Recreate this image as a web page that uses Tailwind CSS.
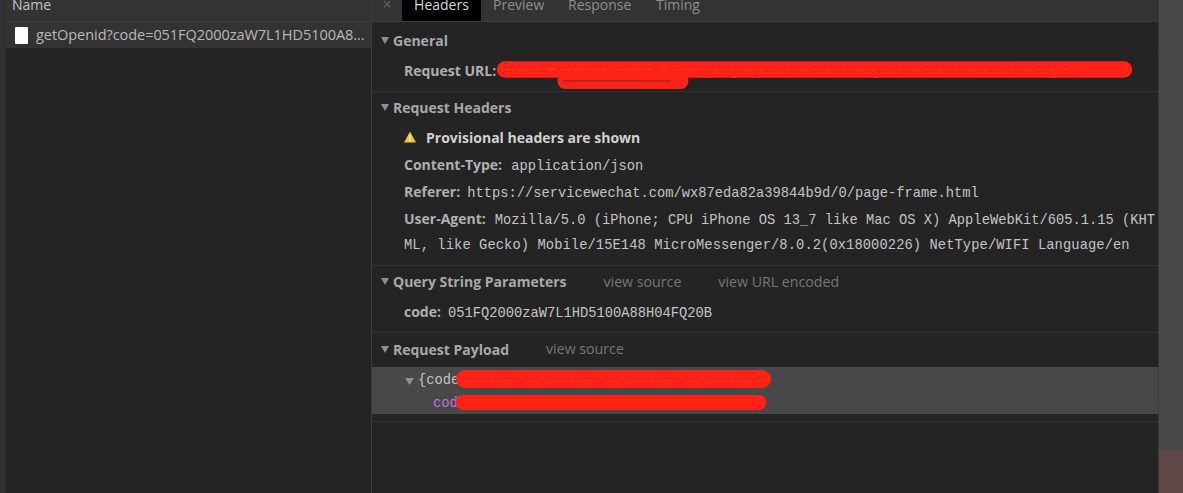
<!DOCTYPE html>
<html lang="en">
<head>
    <meta charset="UTF-8">
    <title>Network panel</title>
    <script src="https://cdn.jsdelivr.net/npm/@tailwindcss/browser@4"></script>
</head>
<body class="bg-[#242424] overflow-hidden font-['Open_Sans',sans-serif] text-[14px]">
    <div class="relative flex w-[1183px] h-[493px] overflow-hidden">
        <!-- Left strip -->
        <div class="w-[6px] bg-[#313131] border-r border-[#2a2a2a]"></div>

        <!-- Request list -->
        <div class="w-[366px] border-r border-[#3c3c3c] flex flex-col">
            <div class="h-[22px] bg-[#333333] border-b border-[#3d3d3d] pl-[6px] text-[#c4c4c4] leading-[9px] overflow-hidden">Name</div>
            <div class="h-[26px] bg-[#333333] flex items-center pl-[9px] text-[#b9b9b9] text-[14.5px] tracking-[-0.05px] whitespace-nowrap">
                <div class="w-[13px] h-[17px] bg-white rounded-[1px] mr-[8px]"></div>
                <span>getOpenid?code=051FQ2000zaW7L1HD5100A8...</span>
            </div>
        </div>

        <!-- Details -->
        <div class="w-[786px] flex flex-col">
            <div class="h-[22px] bg-[#333333] border-b border-[#3d3d3d] flex text-[#8e8e8e] leading-[9px] overflow-hidden">
                <span class="w-[30px] text-center text-[#666666] text-[16px] leading-[8px]">×</span>
                <span class="w-[79px] h-[21px] bg-black text-[#d6d6d6] text-center">Headers</span>
                <span class="ml-[12px] w-[51px]">Preview</span>
                <span class="ml-[24px] w-[64px]">Response</span>
                <span class="ml-[24px]">Timing</span>
            </div>

            <!-- General -->
            <div class="h-[70px] border-b border-[#333333]">
                <div class="h-[36px] pl-[9px] flex items-center gap-[4px] text-[#a9a9a9] font-bold">
                    <svg width="8" height="7" viewBox="0 0 8 7"><polygon points="0,0 8,0 4,7" fill="#8f8f8f"/></svg>
                    <span>General</span>
                </div>
                <div class="h-[24px] pl-[32px] flex items-center text-[#b0b0b0] font-bold">Request URL:</div>
            </div>

            <!-- Request Headers -->
            <div class="h-[174px] border-b border-[#333333]">
                <div class="h-[31px] pl-[9px] flex items-center gap-[4px] text-[#a9a9a9] font-bold">
                    <svg width="8" height="7" viewBox="0 0 8 7"><polygon points="0,0 8,0 4,7" fill="#8f8f8f"/></svg>
                    <span>Request Headers</span>
                </div>
                <div class="h-[28px] pl-[32px] flex items-center gap-[10px] text-[#d2d2d2] font-bold">
                    <svg width="12" height="12" viewBox="0 0 12 12"><polygon points="6,0.5 12,11.5 0,11.5" fill="#f4c22b"/><rect x="5.4" y="4" width="1.2" height="4.5" fill="#fff"/><rect x="5.4" y="9.2" width="1.2" height="1.2" fill="#fff"/></svg>
                    <span>Provisional headers are shown</span>
                </div>
                <div class="h-[27px] leading-[27px] pl-[32px] whitespace-nowrap"><span class="text-[#b0b0b0] font-bold mr-[9px]">Content-Type:</span><span class="font-['Liberation_Mono',monospace] text-[13.75px] text-[#c4c4c4]">application/json</span></div>
                <div class="h-[27px] leading-[27px] pl-[32px] whitespace-nowrap"><span class="text-[#b0b0b0] font-bold mr-[7px]">Referer:</span><span class="font-['Liberation_Mono',monospace] text-[13.75px] text-[#c4c4c4]">https://servicewechat.com/wx87eda82a39844b9d/0/page-frame.html</span></div>
                <div class="h-[27px] leading-[27px] pl-[32px] whitespace-nowrap"><span class="text-[#b0b0b0] font-bold mr-[9px]">User-Agent:</span><span class="font-['Liberation_Mono',monospace] text-[13.75px] text-[#c4c4c4]">Mozilla/5.0 (iPhone; CPU iPhone OS 13_7 like Mac OS X) AppleWebKit/605.1.15 (KHT</span></div>
                <div class="h-[27px] leading-[27px] pl-[32px] whitespace-nowrap font-['Liberation_Mono',monospace] text-[13.75px] tracking-[0.09px] text-[#c4c4c4]">ML, like Gecko) Mobile/15E148 MicroMessenger/8.0.2(0x18000226) NetType/WIFI Language/en</div>
            </div>

            <!-- Query String Parameters -->
            <div class="h-[67px] border-b border-[#333333]">
                <div class="h-[31px] pl-[9px] flex items-center text-[#a9a9a9] font-bold">
                    <svg class="mr-[4px]" width="8" height="7" viewBox="0 0 8 7"><polygon points="0,0 8,0 4,7" fill="#8f8f8f"/></svg>
                    <span>Query String Parameters</span>
                    <span class="ml-[37px] text-[#777777] font-normal text-[14.2px]">view source</span>
                    <span class="ml-[37px] text-[#777777] font-normal text-[14.2px]">view URL encoded</span>
                </div>
                <div class="h-[29px] leading-[29px] pl-[32px] whitespace-nowrap"><span class="text-[#b0b0b0] font-bold mr-[7px]">code:</span><span class="font-['Liberation_Mono',monospace] text-[13.75px] text-[#c4c4c4]">051FQ2000zaW7L1HD5100A88H04FQ20B</span></div>
            </div>

            <!-- Request Payload -->
            <div class="h-[89px] border-b border-[#333333]">
                <div class="h-[34px] pb-[2px] pl-[9px] flex items-center text-[#a9a9a9] font-bold">
                    <svg class="mr-[4px]" width="8" height="7" viewBox="0 0 8 7"><polygon points="0,0 8,0 4,7" fill="#8f8f8f"/></svg>
                    <span>Request Payload</span>
                    <span class="ml-[37px] text-[#777777] font-normal text-[14.2px]">view source</span>
                </div>
                <div class="h-[47px] bg-[#484848] font-['Liberation_Mono',monospace] text-[13.75px]">
                    <div class="h-[28px] pl-[33px] flex items-center text-[#c4c4c4]">
                        <svg class="mr-[4px]" width="9" height="7" viewBox="0 0 9 7"><polygon points="0,0 9,0 4.5,7" fill="#8f8f8f"/></svg>
                        <span>{code</span>
                    </div>
                    <div class="h-[19px] pl-[61px] flex items-center text-[#c66fd8]">cod</div>
                </div>
            </div>
        </div>

        <!-- Right strip -->
        <div class="w-[25px] bg-[#484848] border-l border-[#3a3a3a] flex flex-col">
            <div class="h-[53px] border-b border-[#404040]"></div>
            <div class="h-[47px] border-b border-[#404040]"></div>
            <div class="h-[304px] border-b border-[#404040]"></div>
            <div class="h-[47px]"></div>
            <div class="flex-1 bg-[#5e4746]"></div>
        </div>

        <!-- Red scribbles drawn over the screenshot -->
        <svg class="absolute left-0 top-0" width="1183" height="493" viewBox="0 0 1183 493" fill="none">
            <path d="M705 77h2M732 77h4M759 77h1M874 77h3M1052 77h3" stroke="#9a9aa8" stroke-width="1.5"/>
            <path d="M505 69.5H1124" stroke="#ff2215" stroke-width="16.500" stroke-linecap="round"/>
            <path d="M565 81.500H681" stroke="#ff2215" stroke-width="15" stroke-linecap="round"/>
            <path d="M505 69.5H1068" stroke="#ff6a5e" stroke-width="0.5" stroke-dasharray="9 5"/>
            <path d="M563 81H671" stroke="#a8241c" stroke-width="1.4"/>
            <path d="M465 379H762" stroke="#ff2215" stroke-width="18" stroke-linecap="round"/>
            <path d="M464 378.5H762" stroke="#b0362c" stroke-width="1.2" stroke-dasharray="7 3"/>
            <path d="M463 402.500H759" stroke="#ff2215" stroke-width="15" stroke-linecap="round"/>
        </svg>
    </div>
</body>
</html>
